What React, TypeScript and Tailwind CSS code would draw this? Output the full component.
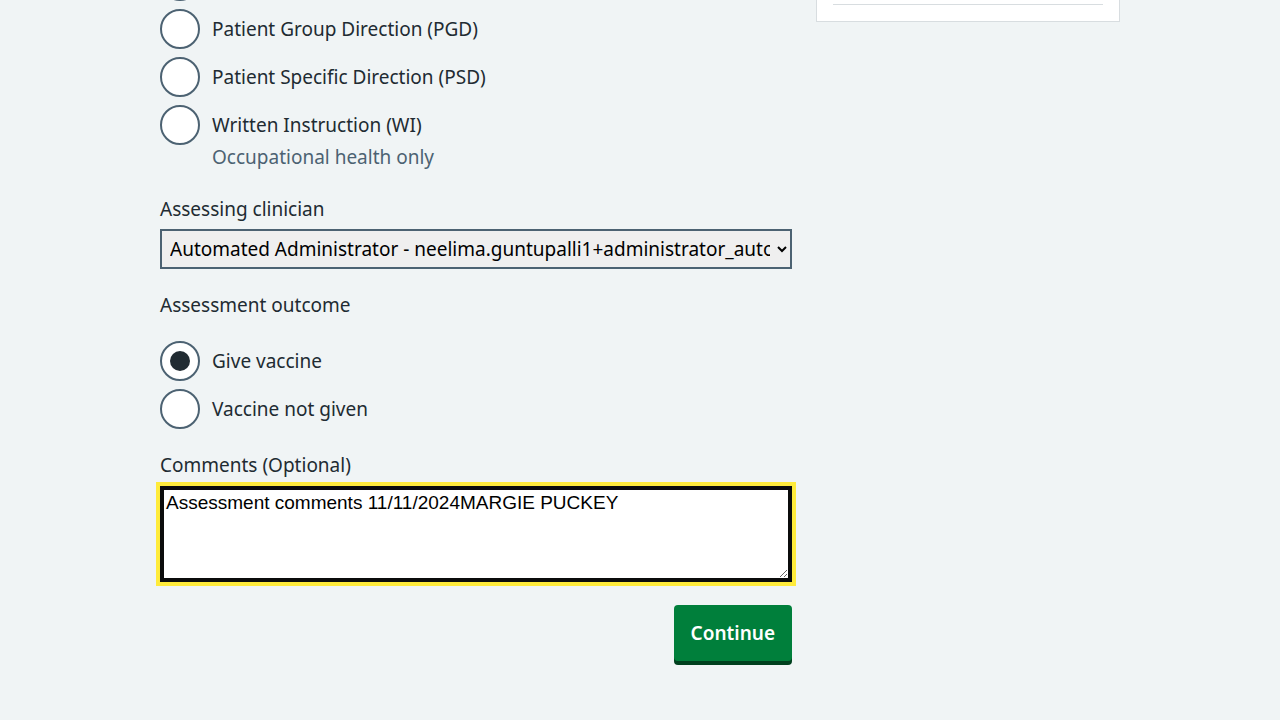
import React from "react";

const F = '"Noto Sans", "Liberation Sans", Arial, sans-serif';

function Radio({ checked = false, label }: { checked?: boolean; label: string }) {
  return (
    <div className="flex items-center h-[40px]">
      <div className="w-[40px] h-[40px] rounded-full border-2 border-[#4c6272] bg-white flex items-center justify-center shrink-0">
        {checked && <div className="w-[20px] h-[20px] rounded-full bg-[#212b32]" />}
      </div>
      <span className="pl-[12px] text-[19px] leading-[28px] text-[#212b32]">{label}</span>
    </div>
  );
}

export default function App() {
  return (
    <div className="min-h-[720px] h-[720px] overflow-hidden bg-[#f0f4f5]" style={{ fontFamily: F }}>
      <div className="w-[960px] mx-auto flex gap-[24px] items-start">
        <div className="w-[632px] mt-[-39px] flex flex-col">
          <div className="flex flex-col gap-[8px]">
            <Radio label="Protocol" />
            <Radio label="Patient Group Direction (PGD)" />
            <Radio label="Patient Specific Direction (PSD)" />
            <div className="flex items-start">
              <div className="w-[40px] h-[40px] rounded-full border-2 border-[#4c6272] bg-white shrink-0" />
              <div className="pl-[12px] pt-[6px] flex flex-col">
                <span className="text-[19px] leading-[28px] text-[#212b32]">Written Instruction (WI)</span>
                <span className="mt-[4px] text-[19px] leading-[28px] text-[#4c6272]">Occupational health only</span>
              </div>
            </div>
          </div>

          <label className="mt-[24px] text-[19px] leading-[28px] text-[#212b32]">Assessing clinician</label>
          <select
            className="mt-[6px] h-[40px] w-full border-2 border-[#4c6272] bg-[#efefef] text-black text-[19px] pl-[4px] pr-[4px] outline-none"
            style={{ fontFamily: F }}
            defaultValue="a"
          >
            <option value="a">Automated Administrator - neelima.guntupalli1+administrator_automated@nhs.net</option>
          </select>

          <div className="mt-[22px] text-[19px] leading-[28px] text-[#212b32]">Assessment outcome</div>
          <div className="mt-[22px] flex flex-col gap-[8px]">
            <Radio checked label="Give vaccine" />
            <Radio label="Vaccine not given" />
          </div>

          <label className="mt-[22px] text-[19px] leading-[28px] text-[#212b32]">Comments (Optional)</label>
          <textarea
            className="mt-[7px] h-[96px] w-full border-4 border-[#0b0c0c] bg-white text-black text-[19px] leading-[22px] p-[2px] outline-[4px] outline-solid outline-[#ffeb3b] resize"
            style={{ fontFamily: '"Liberation Sans", Arial, sans-serif' }}
            defaultValue="Assessment comments 11/11/2024MARGIE PUCKEY"
          />

          <div className="mt-[23px] flex justify-end">
            <button className="h-[56px] px-[17px] rounded-[4px] bg-[#007f3b] text-white font-semibold text-[19px] shadow-[0_4px_0_#00401e]">
              Continue
            </button>
          </div>
        </div>

        <div className="w-[304px] mt-[-80px] bg-white border border-[#d8dde0] px-[16px] pb-[16px]">
          <div className="h-[83px]" />
          <div className="h-px bg-[#d8dde0]" />
        </div>
      </div>
    </div>
  );
}
